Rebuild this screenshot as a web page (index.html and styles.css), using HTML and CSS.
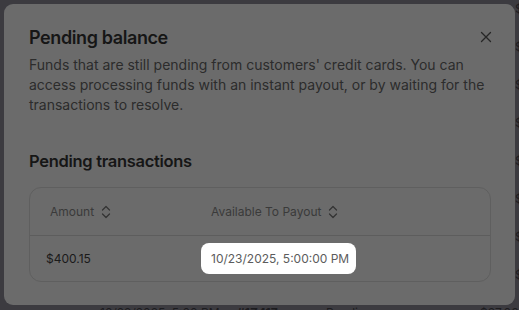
FILE: index.html
```html
<!DOCTYPE html>
<html lang="en">
<head>
<meta charset="utf-8">
<title>Pending balance</title>
<link rel="stylesheet" href="styles.css">
</head>
<body>
<div class="page">
  <div class="page-row"><span class="c5">$37.00</span></div>
  <div class="page-row"><span class="c5">$37.00</span></div>
  <div class="page-row"><span class="c5">$37.00</span></div>
  <div class="page-row"><span class="c5">$37.00</span></div>
  <div class="page-row"><span class="c5">$37.00</span></div>
  <div class="page-row"><span class="c5">$37.00</span></div>
  <div class="page-row"><span class="c5">$37.00</span></div>
  <div class="page-row"><span class="c5">$37.00</span></div>
  <div class="page-row"><span class="c1">10/22/2025, 5:00 PM</span><span class="c2">#1Z417</span><span class="c3">Pending</span><span class="c4">$37.00</span></div>
</div>

<div class="modal">
  <div class="modal-head">
    <h2 class="title">Pending balance</h2>
    <button class="close" aria-label="Close">
      <svg width="12" height="12" viewBox="0 0 12 12"><path d="M1.5 1.5l9 9M10.5 1.5l-9 9" stroke="currentColor" stroke-width="1.3" stroke-linecap="round" fill="none"/></svg>
    </button>
  </div>
  <p class="desc">Funds that are still pending from customers' credit cards. You can access processing funds with an instant payout, or by waiting for the transactions to resolve.</p>

  <h3 class="subtitle">Pending transactions</h3>

  <div class="table">
    <div class="thead">
      <div class="th th-amount">Amount
        <svg class="sort" width="10" height="14" viewBox="0 0 10 14"><path d="M1.5 5L5 1.5 8.5 5M1.5 9L5 12.5 8.5 9" stroke="currentColor" stroke-width="1.2" fill="none" stroke-linecap="round" stroke-linejoin="round"/></svg>
      </div>
      <div class="th th-date">Available To Payout
        <svg class="sort" width="10" height="14" viewBox="0 0 10 14"><path d="M1.5 5L5 1.5 8.5 5M1.5 9L5 12.5 8.5 9" stroke="currentColor" stroke-width="1.2" fill="none" stroke-linecap="round" stroke-linejoin="round"/></svg>
      </div>
    </div>
    <div class="trow">
      <div class="td td-amount">$400.15</div>
      <div class="td td-date"><span class="spot">10/23/2025, 5:00:00 PM</span></div>
    </div>
  </div>
</div>
</body>
</html>
```
FILE: styles.css
```css
* { box-sizing: border-box; }
html, body { margin: 0; padding: 0; }
body {
  width: 519px;
  height: 310px;
  overflow: hidden;
  background: #3c3b40;
  font-family: Inter, "Noto Sans", sans-serif;
  position: relative;
}

.page {
  padding-top: 1px;
}
.page-row {
  height: 38px;
  font-size: 12px;
  line-height: 16px;
  color: #1c1c1f;
  white-space: nowrap;
  position: relative;
}
.page-row span { position: absolute; top: 0; }
.page-row .c1 { left: 100px; }
.page-row .c2 { left: 237px; font-weight: 700; }
.page-row .c3 { left: 326px; }
.page-row .c4 { left: 480px; }
.page-row .c5 { left: 515px; }

.modal {
  position: absolute;
  left: 4px;
  top: 4px;
  width: 511px;
  height: 301px;
  background: #6b6b6b;
  border-radius: 9px;
  padding: 20px 25px 0 25px;
}

.modal-head {
  display: flex;
  justify-content: space-between;
  align-items: flex-start;
}
.title {
  margin: 0;
  font-size: 18px;
  line-height: 28px;
  font-weight: 600;
  color: #161616;
  letter-spacing: -0.4px;
}
.close {
  border: 0;
  background: none;
  padding: 0;
  margin: 6px -3px 0 0;
  width: 14px;
  height: 14px;
  display: flex;
  align-items: center;
  justify-content: center;
  color: #262626;
}

.desc {
  margin: 3px 0 0 0;
  font-size: 14px;
  line-height: 20px;
  color: #2c2c2c;
}

.subtitle {
  margin: 34px 0 0 0;
  font-size: 16.5px;
  line-height: 24px;
  font-weight: 600;
  color: #161616;
  letter-spacing: -0.3px;
}

.table {
  margin-top: 14px;
  width: 462px;
  border: 1px solid #5f5f5f;
  border-radius: 12px;
}
.thead, .trow {
  display: grid;
  grid-template-columns: 166px 1fr;
  align-items: center;
}
.thead {
  height: 48px;
  border-bottom: 1px solid #5d5d5d;
}
.trow { height: 45px; }
.th {
  font-size: 12px;
  color: #3a3a3a;
  display: flex;
  align-items: center;
  gap: 7px;
}
.th-amount { padding-left: 20px; }
.th-date { padding-left: 15px; }
.sort { color: #333; }

.td { font-size: 12px; }
.td-amount { padding-left: 16px; color: #1a1a1a; }
.td-date { padding-left: 5px; }
.spot {
  display: inline-flex;
  align-items: center;
  height: 31px;
  padding: 0 7px 0 10px;
  background: #ffffff;
  border-radius: 8px;
  color: #5c5c5c;
}
```
